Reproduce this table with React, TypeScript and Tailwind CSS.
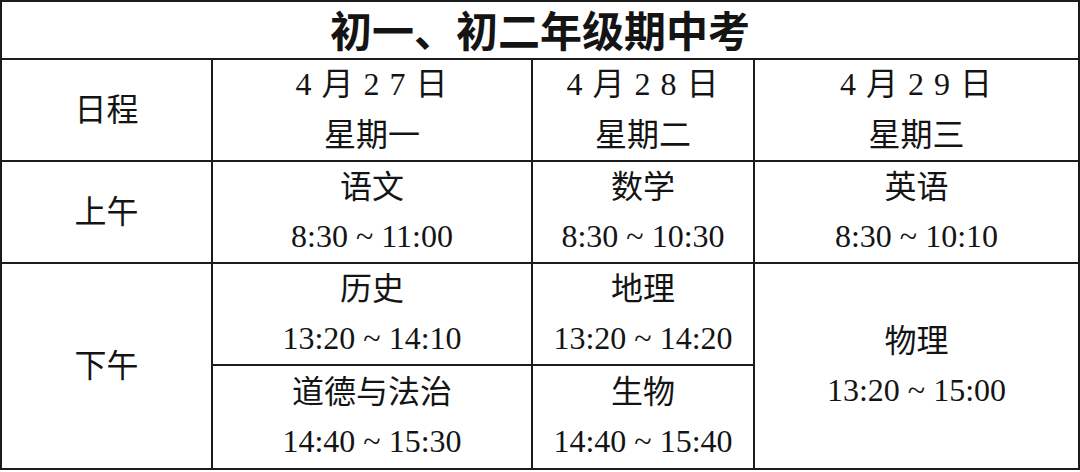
const font = "font-['Liberation_Serif','Noto_Sans_CJK_SC',serif]";

type Exam = { subject: string; time: string };

function ExamCell({ exam, className = "" }: { exam: Exam; className?: string }) {
  return (
    <div className={`flex flex-col items-center justify-center bg-white text-[32px] leading-[49px] ${className}`}>
      <span>{exam.subject}</span>
      <span>{exam.time}</span>
    </div>
  );
}

const days = [
  { date: "4 月 2 7 日", week: "星期一" },
  { date: "4 月 2 8 日", week: "星期二" },
  { date: "4 月 2 9 日", week: "星期三" },
];

export default function App() {
  return (
    <div className={`h-[472px] w-[1080px] bg-white text-[#141414] ${font}`}>
      <div className="grid h-[470px] grid-cols-[209px_318px_220px_323px] grid-rows-[56px_100px_100px_100px_102px] gap-[2px] bg-[#1c1c1c] p-[2px]">
        <div className="col-span-4 flex items-center justify-center bg-white pt-[5px] text-[42px] font-bold leading-none">
          初一、初二年级期中考
        </div>

        <div className="flex items-center justify-center bg-white text-[32px]">日程</div>
        {days.map((d) => (
          <div key={d.week} className="flex flex-col items-center justify-center bg-white text-[32px] leading-[51px]">
            <span className="whitespace-pre tracking-[1px]">{d.date}</span>
            <span>{d.week}</span>
          </div>
        ))}

        <div className="flex items-center justify-center bg-white text-[32px]">上午</div>
        <ExamCell exam={{ subject: "语文", time: "8:30 ~ 11:00" }} />
        <ExamCell exam={{ subject: "数学", time: "8:30 ~ 10:30" }} />
        <ExamCell exam={{ subject: "英语", time: "8:30 ~ 10:10" }} />

        <div className="row-span-2 flex items-center justify-center bg-white text-[32px]">下午</div>
        <ExamCell exam={{ subject: "历史", time: "13:20 ~ 14:10" }} />
        <ExamCell exam={{ subject: "地理", time: "13:20 ~ 14:20" }} />
        <ExamCell exam={{ subject: "物理", time: "13:20 ~ 15:00" }} className="row-span-2" />
        <ExamCell exam={{ subject: "道德与法治", time: "14:40 ~ 15:30" }} />
        <ExamCell exam={{ subject: "生物", time: "14:40 ~ 15:40" }} />
      </div>
    </div>
  );
}
